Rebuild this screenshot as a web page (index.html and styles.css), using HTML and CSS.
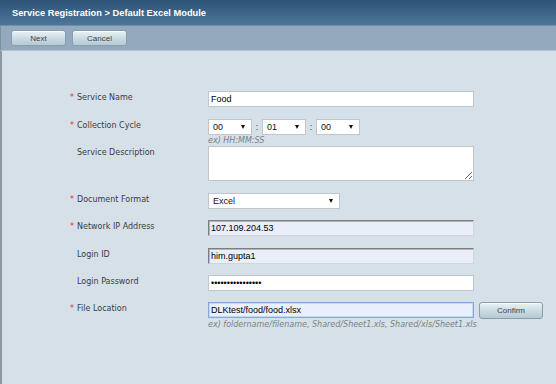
FILE: index.html
```html
<!DOCTYPE html>
<html>
<head>
<meta charset="utf-8">
<link rel="stylesheet" href="styles.css">
</head>
<body>
<div class="header"><h1 class="title">Service Registration &gt; Default Excel Module</h1></div>
<div class="toolbar">
  <button class="btn btn-bar">Next</button>
  <button class="btn btn-bar">Cancel</button>
</div>
<div class="content">
  <form class="form">
    <div class="row gap12">
      <label class="label"><span class="req">*</span>Service Name</label>
      <div class="field"><input class="text plain wide" type="text" value="Food"></div>
    </div>
    <div class="row gap0">
      <label class="label"><span class="req">*</span>Collection Cycle</label>
      <div class="field">
        <div class="time">
          <span class="sel small"><select><option>00</option></select></span>
          <span class="colon">:</span>
          <span class="sel small"><select><option>01</option></select></span>
          <span class="colon">:</span>
          <span class="sel small"><select><option>00</option></select></span>
        </div>
        <div class="hint">ex) HH:MM:SS</div>
      </div>
    </div>
    <div class="row gap12">
      <label class="label"><span class="req"></span>Service Description</label>
      <div class="field"><textarea class="area"></textarea></div>
    </div>
    <div class="row gap11">
      <label class="label"><span class="req">*</span>Document Format</label>
      <div class="field"><span class="sel medium"><select><option>Excel</option></select></span></div>
    </div>
    <div class="row gap12">
      <label class="label"><span class="req">*</span>Network IP Address</label>
      <div class="field"><input class="text inset wide" type="text" value="107.109.204.53"></div>
    </div>
    <div class="row gap11">
      <label class="label"><span class="req"></span>Login ID</label>
      <div class="field"><input class="text inset wide" type="text" value="him.gupta1"></div>
    </div>
    <div class="row gap11">
      <label class="label"><span class="req"></span>Login Password</label>
      <div class="field"><input class="text plain wide" type="password" value="abcdefghijklmnop"></div>
    </div>
    <div class="row">
      <label class="label"><span class="req">*</span>File Location</label>
      <div class="field">
        <div class="line">
          <input class="text focus wide" type="text" value="DLKtest/food/food.xlsx">
          <button type="button" class="btn btn-confirm">Confirm</button>
        </div>
        <div class="hint">ex) foldername/filename, Shared/Sheet1.xls, Shared/xls/Sheet1.xls</div>
      </div>
    </div>
  </form>
</div>
</body>
</html>
```
FILE: styles.css
```css
html, body {
  margin: 0;
  padding: 0;
  height: 100%;
}
body {
  display: flex;
  flex-direction: column;
  background: #d6e0e8;
  font-family: "DejaVu Sans", sans-serif;
}
.header {
  height: 25px;
  background: linear-gradient(#2d5476, #4d7698);
  display: flex;
  align-items: center;
  padding-left: 12px;
}
.title {
  margin: 0;
  font-family: "Liberation Sans", Arial, sans-serif;
  font-weight: bold;
  font-size: 9.3px;
  color: #ffffff;
}
.toolbar {
  border-top: 1px solid #6f8ea9;
  border-bottom: 1px solid #b3c2cf;
  border-left: 1px solid #7f909f;
  background: #94a9bd;
  display: flex;
  align-items: flex-start;
  gap: 6px;
  padding: 4px 0 0 10px;
  box-sizing: border-box;
  height: 26px;
}
.btn {
  font-family: "Liberation Sans", Arial, sans-serif;
  font-size: 8px;
  color: #3a454d;
  border: 1px solid #86a0b2;
  border-radius: 3px;
  background: linear-gradient(#eaf2f5, #c9dae2 55%, #b6cad4);
  box-shadow: inset 0 1px 0 #f6fbfc;
  padding: 0;
  margin: 0;
}
.btn-bar {
  width: 55px;
  height: 16px;
}
.content {
  flex: 1;
  border-left: 2px solid #8d97a1;
}
.form {
  padding: 40px 0 0 68px;
  display: flex;
  flex-direction: column;
}
.row {
  display: flex;
  align-items: flex-start;
}
.gap0 { margin-bottom: 0; }
.gap11 { margin-bottom: 11px; }
.gap12 { margin-bottom: 12px; }
.label {
  width: 138px;
  flex: none;
  font-size: 8px;
  line-height: 10px;
  padding-top: 2px;
  color: #3a3d40;
  display: flex;
}
.req {
  width: 7px;
  color: #e0302c;
  font-size: 8px;
}
.field {
  display: flex;
  flex-direction: column;
}
.text {
  box-sizing: border-box;
  height: 16px;
  margin: 0;
  padding: 0 2px;
  font-family: "Liberation Sans", Arial, sans-serif;
  font-size: 9px;
  color: #000;
  outline: none;
}
.wide { width: 266px; }
.plain {
  background: #ffffff;
  border: 1px solid #c3c6c8;
}
.inset {
  background: #e9eefa;
  border: 1px solid;
  border-color: #7d7d7d #d2d4d6 #d2d4d6 #7d7d7d;
  box-shadow: inset 1px 1px 0 #b4b6b8;
}
.focus {
  background: #e9f0fd;
  border: 1px solid #82a9d6;
  box-shadow: inset 0 0 0 1px #c6d7ee;
}
.time {
  display: flex;
  align-items: flex-start;
  height: 16px;
}
.colon {
  width: 10px;
  line-height: 16px;
  text-align: center;
  font-family: "Liberation Sans", Arial, sans-serif;
  font-size: 9px;
  color: #333;
}
.sel {
  position: relative;
  display: block;
  height: 16px;
  font-size: 9px;
  line-height: 16px;
}
.sel select {
  display: block;
  appearance: none;
  -webkit-appearance: none;
  box-sizing: border-box;
  width: 100%;
  height: 16px;
  margin: 0;
  padding: 0 0 0 4px;
  border: 1px solid #c3c6c8;
  border-radius: 0;
  background: #ffffff;
  font-family: "Liberation Sans", Arial, sans-serif;
  font-size: 9px;
  color: #111;
  outline: none;
}
.sel::after {
  content: "";
  position: absolute;
  top: 6px;
  right: 7px;
  border-left: 2.5px solid transparent;
  border-right: 2.5px solid transparent;
  border-top: 4px solid #111;
}
.small { width: 44px; }
.medium { width: 132px; }
.hint {
  font-size: 8px;
  font-style: italic;
  line-height: 11px;
  color: #7c8085;
}
.area {
  display: block;
  box-sizing: border-box;
  width: 266px;
  height: 35px;
  margin: 0;
  border: 1px solid #c3c6c8;
  background: #fff;
  resize: both;
}
.line {
  display: flex;
  align-items: flex-start;
  gap: 5px;
}
.btn-confirm {
  width: 64px;
  height: 17px;
}
```
